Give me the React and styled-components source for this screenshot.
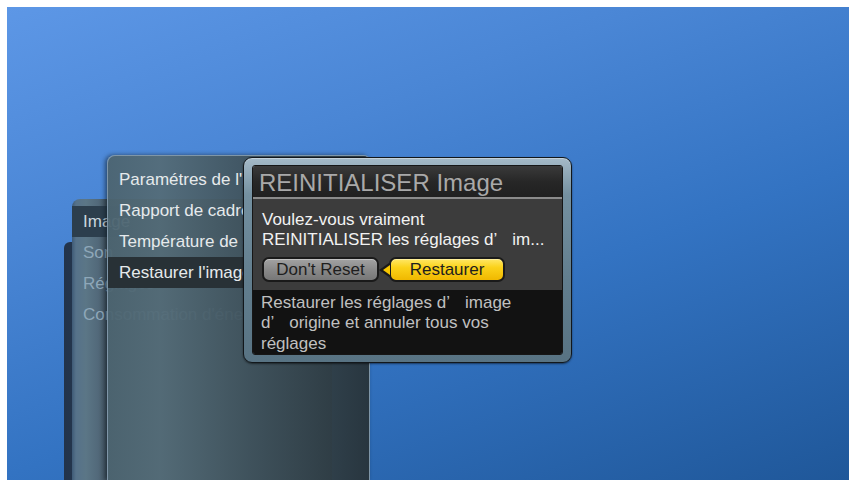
import React from 'react';
import styled, { createGlobalStyle } from 'styled-components';

const GlobalStyle = createGlobalStyle`
  html, body { background: #ffffff; }
  body {
    margin: 7px;
    font-family: "Liberation Sans", Arial, sans-serif;
  }
  * { box-sizing: border-box; }
`;

const Screen = styled.div`
  position: relative;
  width: 845px;
  height: 473px;
  overflow: hidden;
  background: linear-gradient(160deg, #5d97e6 0%, #4a86d5 30%, #3373c2 60%, #1f5799 100%);
`;

/* deepest menu layer, only its edge peeks out */
const BackLayer = styled.div`
  position: absolute;
  left: 57px;
  top: 235px;
  bottom: 0;
  width: 60px;
  border-radius: 6px 0 0 0;
  background: linear-gradient(90deg, #22334a 0%, #2c4058 100%);
`;

const SideMenu = styled.nav`
  position: absolute;
  left: 65px;
  top: 192px;
  bottom: 0;
  width: 260px;
  padding-top: 7px;
  display: flex;
  flex-direction: column;
  border-radius: 8px 0 0 0;
  background: linear-gradient(90deg, #3e5a76 0px, #56728a 4px, #5b7686 14px, #52697a 26px, #3f505c 36px, #34434d 100%);
`;

const SideItem = styled.div`
  height: 31px;
  line-height: 31px;
  padding-left: 11px;
  font-size: 17px;
  white-space: nowrap;
  color: ${p => (p.$active ? '#c9d5de' : '#8ea7b9')};
  background: ${p => (p.$active ? '#2c3e4d' : 'transparent')};
`;

const SubMenu = styled.nav`
  position: absolute;
  left: 100px;
  top: 148px;
  bottom: 0;
  width: 263px;
  padding-top: 8px;
  display: flex;
  flex-direction: column;
  border: 1px solid #7f96a8;
  border-bottom: none;
  border-radius: 8px 6px 0 0;
  background: linear-gradient(
    90deg,
    rgba(76, 100, 112, 0.95) 0%,
    rgba(84, 108, 120, 0.95) 20%,
    rgba(63, 82, 92, 0.95) 55%,
    rgba(40, 52, 59, 0.97) 100%
  );
  box-shadow: -2px 0 4px rgba(10, 20, 30, 0.55);
`;

const SubItem = styled.div`
  height: 31px;
  line-height: 31px;
  padding-left: 11px;
  font-size: 17px;
  white-space: nowrap;
  color: #e6eaec;
  background: ${p => (p.$active ? '#283136' : 'transparent')};
`;

/* confirmation dialog */
const Dialog = styled.section`
  position: absolute;
  left: 236px;
  top: 150px;
  width: 329px;
  height: 206px;
  padding: 7px 8px;
  border: 1px solid #12171b;
  border-radius: 9px;
  background: linear-gradient(180deg, #a5bac8 0%, #7490a0 18%, #627e8e 60%, #587383 100%);
  box-shadow: inset 0 1px 0 rgba(255, 255, 255, 0.35), 0 1px 2px rgba(0, 0, 0, 0.5);
`;

const DialogInner = styled.div`
  height: 100%;
  display: flex;
  flex-direction: column;
  border: 1px solid #161616;
  border-radius: 3px;
  overflow: hidden;
`;

const TitleBar = styled.h2`
  margin: 0;
  height: 33px;
  padding: 2px 0 0 6px;
  font-size: 24px;
  font-weight: normal;
  line-height: 29px;
  color: #a9a9a9;
  border-bottom: 2px solid #8b8b8b;
  background: linear-gradient(180deg, #3a3a3a 0%, #272727 50%, #202020 100%);
`;

const Body = styled.div`
  height: 91px;
  padding: 11px 0 0 9px;
  display: flex;
  flex-direction: column;
  background: #3c3c3c;
`;

const Question = styled.p`
  margin: 0;
  font-size: 17px;
  line-height: 20px;
  color: #f2f2f2;
  white-space: nowrap;
`;

const Buttons = styled.div`
  display: flex;
  gap: 10px;
  margin-top: 7px;
`;

const Button = styled.button`
  position: relative;
  width: ${p => p.$w}px;
  height: 25px;
  padding: 0;
  font-family: inherit;
  font-size: 17px;
  line-height: 21px;
  color: #1e1e1e;
  border: 2px solid #1a1a1a;
  border-radius: 7px;
  background: ${p =>
    p.$focused
      ? 'linear-gradient(180deg, #ffe766 0%, #fbd21a 40%, #f0b800 100%)'
      : 'linear-gradient(180deg, #a3a3a3 0%, #8a8a8a 50%, #777777 100%)'};
  box-shadow: inset 0 1px 0 rgba(255, 255, 255, 0.35);

  ${p =>
    p.$focused &&
    `
    &::before {
      content: '';
      position: absolute;
      left: -12px;
      top: 50%;
      transform: translateY(-50%);
      border-style: solid;
      border-width: 7px 10px 7px 0;
      border-color: transparent #1a1a1a transparent transparent;
    }
    &::after {
      content: '';
      position: absolute;
      left: -8px;
      top: 50%;
      transform: translateY(-50%);
      border-style: solid;
      border-width: 5px 7px 5px 0;
      border-color: transparent #f7c600 transparent transparent;
    }
  `}
`;

const Description = styled.p`
  flex: 1;
  margin: 0;
  padding: 3px 0 0 8px;
  font-size: 17px;
  line-height: 20.5px;
  color: #c0c0c0;
  background: #121212;
`;

const Gap = styled.span`
  display: inline-block;
  width: 15px;
`;

export default function App() {
  return (
    <>
      <GlobalStyle />
      <Screen>
        <BackLayer />
        <SideMenu>
          <SideItem $active>Image</SideItem>
          <SideItem>Son</SideItem>
          <SideItem>Réglages</SideItem>
          <SideItem>Consommation d'énergie</SideItem>
        </SideMenu>
        <SubMenu>
          <SubItem>Paramétres de l'image</SubItem>
          <SubItem>Rapport de cadre</SubItem>
          <SubItem>Température de couleur</SubItem>
          <SubItem $active>Restaurer l'image</SubItem>
        </SubMenu>
        <Dialog>
          <DialogInner>
            <TitleBar>REINITIALISER Image</TitleBar>
            <Body>
              <Question>Voulez-vous vraiment</Question>
              <Question>
                REINITIALISER les réglages d’<Gap />im...
              </Question>
              <Buttons>
                <Button $w={117}>Don't Reset</Button>
                <Button $w={116} $focused>Restaurer</Button>
              </Buttons>
            </Body>
            <Description>
              Restaurer les réglages d’<Gap />image
              <br />
              d’<Gap />origine et annuler tous vos
              <br />
              réglages
            </Description>
          </DialogInner>
        </Dialog>
      </Screen>
    </>
  );
}
